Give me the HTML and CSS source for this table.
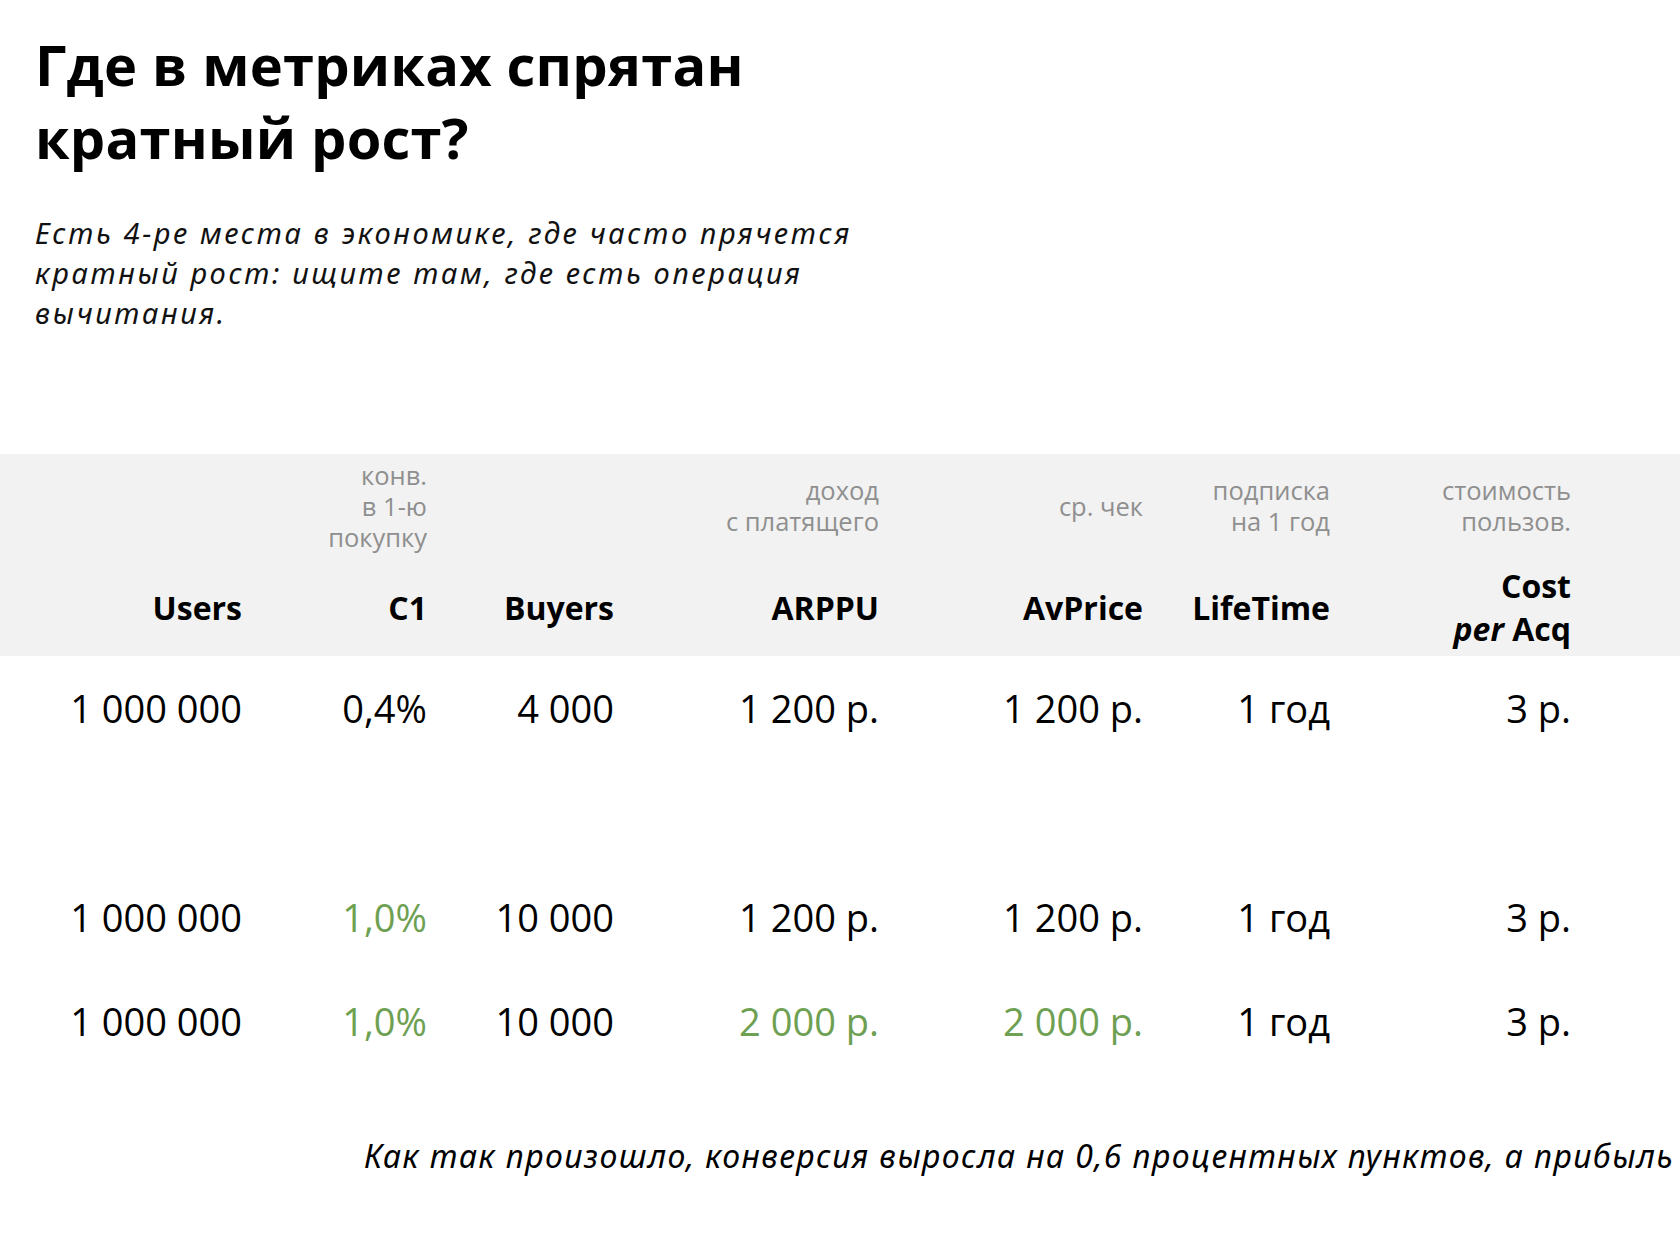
FILE: index.html
```html
<!DOCTYPE html>
<html lang="ru">
<head>
<meta charset="utf-8">
<title>Где в метриках спрятан кратный рост?</title>
<link rel="stylesheet" href="styles.css">
</head>
<body>
<main class="slide">
  <header class="intro">
    <h1 class="title">Где в метриках спрятан<br>кратный рост?</h1>
    <p class="lead">Есть 4-ре места в экономике, где часто прячется<br>кратный рост: ищите там, где есть операция<br>вычитания.</p>
  </header>

  <section class="metrics">
    <div class="metrics-head">
      <div class="hint"></div>
      <div class="hint">конв.<br>в 1-ю<br>покупку</div>
      <div class="hint"></div>
      <div class="hint">доход<br>с платящего</div>
      <div class="hint">ср. чек</div>
      <div class="hint">подписка<br>на 1 год</div>
      <div class="hint">стоимость<br>пользов.</div>

      <div class="name">Users</div>
      <div class="name">C1</div>
      <div class="name">Buyers</div>
      <div class="name">ARPPU</div>
      <div class="name">AvPrice</div>
      <div class="name">LifeTime</div>
      <div class="name">Cost<br><i>per</i> Acq</div>
    </div>

    <div class="row">
      <div>1 000 000</div>
      <div>0,4%</div>
      <div>4 000</div>
      <div>1 200 р.</div>
      <div>1 200 р.</div>
      <div>1 год</div>
      <div>3 р.</div>
    </div>

    <div class="row row-gap">
      <div>1 000 000</div>
      <div class="up">1,0%</div>
      <div>10 000</div>
      <div>1 200 р.</div>
      <div>1 200 р.</div>
      <div>1 год</div>
      <div>3 р.</div>
    </div>

    <div class="row">
      <div>1 000 000</div>
      <div class="up">1,0%</div>
      <div>10 000</div>
      <div class="up">2 000 р.</div>
      <div class="up">2 000 р.</div>
      <div>1 год</div>
      <div>3 р.</div>
    </div>
  </section>

  <p class="note">Как так произошло, конверсия выросла на 0,6 процентных пунктов, а прибыль выросла в разы?</p>
</main>
</body>
</html>
```

FILE: styles.css
```css
html, body {
  margin: 0;
  padding: 0;
  background: #ffffff;
}

body {
  font-family: "Open Sans", "Noto Sans", "DejaVu Sans", sans-serif;
  color: #000;
  overflow: hidden;
  width: 1680px;
  height: 1234px;
}

.slide {
  width: 1680px;
  height: 1234px;
  overflow: hidden;
}

.intro {
  padding: 28px 0 0 35px;
}

.title {
  margin: 0;
  font-size: 56px;
  font-weight: 700;
  line-height: 73px;
  letter-spacing: 0.2px;
}

.lead {
  margin: 39px 0 0;
  font-family: "Noto Sans", "Open Sans", sans-serif;
  font-style: italic;
  font-size: 29px;
  line-height: 40px;
  letter-spacing: 2.6px;
  color: #111;
}

.metrics {
  margin-top: 121px;
}

.metrics-head,
.row {
  display: grid;
  grid-template-columns: 242px 185px 187px 265px 264px 187px 241px;
  align-items: center;
}

.metrics-head {
  background: #f2f2f2;
  grid-template-rows: 104px 98px;
}

.hint,
.name,
.row > div {
  text-align: right;
}

.hint {
  font-size: 25.5px;
  line-height: 31px;
  color: #8f8f8f;
}

.name {
  font-size: 32px;
  font-weight: 700;
  line-height: 43px;
}

.row {
  height: 104px;
}

.row > div {
  font-size: 38px;
  line-height: 50px;
}

.row-gap {
  margin-top: 105px;
}

.up {
  color: #6ea052;
}

.note {
  margin: 63px 0 0 364px;
  font-family: "Noto Sans", "Open Sans", sans-serif;
  font-style: italic;
  font-size: 32px;
  line-height: 40px;
  letter-spacing: 1.4px;
  white-space: nowrap;
}
```
